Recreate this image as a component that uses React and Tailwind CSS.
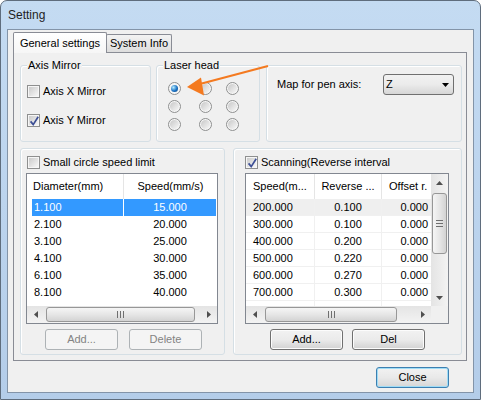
import React from "react";

const leftRows = [
	["1.100", "15.000"],
	["2.100", "20.000"],
	["3.100", "25.000"],
	["4.100", "30.000"],
	["6.100", "35.000"],
	["8.100", "40.000"],
];

const rightRows = [
	["200.000", "0.100", "0.000"],
	["300.000", "0.100", "0.000"],
	["400.000", "0.200", "0.000"],
	["500.000", "0.220", "0.000"],
	["600.000", "0.270", "0.000"],
	["700.000", "0.300", "0.000"],
	["", "", ""],
];

const Checkbox = ({ checked }) => (
	<span className="relative flex h-[13px] w-[13px] shrink-0 items-center justify-center border border-[#8e8f8f] bg-[#f6f6f6]">
		<span className="h-[9px] w-[9px] bg-gradient-to-br from-[#cbcbcb] to-[#f7f7f7]" />
		{checked && (
			<svg className="absolute left-0 top-0" width="13" height="13" viewBox="0 0 13 13">
				<path d="M2.6 6.4 L5.2 9.6 L10.2 1.8" fill="none" stroke="#3d4f95" strokeWidth="1.7" />
			</svg>
		)}
	</span>
);

const Radio = ({ checked }) => (
	<span className="flex h-[13px] w-[13px] items-center justify-center rounded-full border border-[#8e8f8f] bg-[#f6f6f6]">
		{checked ? (
			<span className="h-[7px] w-[7px] rounded-full bg-[radial-gradient(circle_at_35%_35%,#b6ecff,#1a72c4_55%,#0a3f7a)]" />
		) : (
			<span className="h-[9px] w-[9px] rounded-full bg-gradient-to-br from-[#c8c8c8] to-[#f8f8f8]" />
		)}
	</span>
);

const Group = ({ label, className, children }) => (
	<div className={`relative rounded-[3px] border border-[#d5dfe5] shadow-[inset_1px_1px_0_#ffffff] ${className}`}>
		{label && (
			<span className="absolute -top-[8px] left-[6px] bg-[#f0f0f0] px-[1px] leading-[14px]">
				{label}
			</span>
		)}
		{children}
	</div>
);

const Button = ({ children, disabled }) => (
	<div
		className={`flex h-[21px] w-[73px] items-center justify-center rounded-[3px] border ${
			disabled
				? "border-[#adb2b5] bg-[#f4f4f4] text-[#838383]"
				: "border-[#707070] bg-gradient-to-b from-[#f2f2f2] via-[#ebebeb] to-[#d2d2d2] text-black shadow-[inset_0_0_0_1px_#fcfcfc]"
		}`}
	>
		{children}
	</div>
);

const Arrow = ({ dir }) => {
	const pts = {
		left: "5,0 5,7 1,3.5",
		right: "1,0 1,7 5,3.5",
		up: "0,5 7,5 3.5,1",
		down: "0,1 7,1 3.5,5",
	}[dir];
	const w = dir === "left" || dir === "right" ? 6 : 7;
	const h = dir === "left" || dir === "right" ? 7 : 6;
	return (
		<svg width={w} height={h} viewBox={`0 0 ${w} ${h}`}>
			<polygon points={pts} fill="#4f4f4f" />
		</svg>
	);
};

const HScroll = ({ width, thumbLeft, thumbWidth }) => (
	<div className="flex h-[17px] shrink-0 items-center bg-gradient-to-b from-[#e4e4e4] to-[#f3f3f3]" style={{ width }}>
		<div className="flex h-[17px] w-[17px] shrink-0 items-center justify-center">
			<Arrow dir="left" />
		</div>
		<div
			className="flex h-[15px] shrink-0 items-center justify-center gap-[2px] rounded-[3px] border border-[#979797] bg-gradient-to-b from-[#f5f5f5] via-[#e6e6e6] to-[#d3d3d3]"
			style={{ marginLeft: thumbLeft, width: thumbWidth }}
		>
			<span className="h-[7px] w-[1px] bg-[#6f6f6f]" />
			<span className="h-[7px] w-[1px] bg-[#6f6f6f]" />
			<span className="h-[7px] w-[1px] bg-[#6f6f6f]" />
		</div>
		<div className="flex-1" />
		<div className="flex h-[17px] w-[17px] shrink-0 items-center justify-center">
			<Arrow dir="right" />
		</div>
	</div>
);

const VScroll = () => (
	<div className="flex h-[132px] w-[17px] shrink-0 flex-col items-center bg-gradient-to-r from-[#e4e4e4] to-[#f3f3f3]">
		<div className="flex h-[17px] w-[17px] shrink-0 items-center justify-center">
			<Arrow dir="up" />
		</div>
		<div className="mt-[2px] flex h-[61px] w-[15px] shrink-0 flex-col items-center justify-center gap-[2px] rounded-[3px] border border-[#979797] bg-gradient-to-r from-[#f5f5f5] via-[#e6e6e6] to-[#d3d3d3]">
			<span className="h-[1px] w-[7px] bg-[#6f6f6f]" />
			<span className="h-[1px] w-[7px] bg-[#6f6f6f]" />
			<span className="h-[1px] w-[7px] bg-[#6f6f6f]" />
		</div>
		<div className="flex-1" />
		<div className="flex h-[17px] w-[17px] shrink-0 items-center justify-center">
			<Arrow dir="down" />
		</div>
	</div>
);

export default function App() {
	return (
		<div className="relative h-[400px] w-[481px] overflow-hidden rounded-t-[7px] border border-[#5f6d7d] bg-gradient-to-b from-[#c4dbf2] via-[#bcd4ee] to-[#b4cde9] font-['Liberation_Sans',Arial,sans-serif] text-[11px] text-black">
			{/* Title bar */}
			<div className="flex h-[28px] items-center pl-[7px] text-[12px] text-[#1e1e1e]">Setting</div>

			{/* Client area */}
			<div className="mx-[6px] flex h-[364px] flex-col border border-[#8394a8] bg-[#f0f0f0]">
				{/* Tabs */}
				<div className="flex h-[22px] items-end pl-[5px]">
					<div className="relative z-10 -mb-px flex h-[21px] w-[94px] items-center justify-center rounded-t-[2px] border border-b-0 border-[#898c95] bg-gradient-to-b from-white to-[#f6f6f6]">
						General settings
					</div>
					<div className="-ml-px flex h-[18px] w-[66px] items-center justify-center rounded-t-[2px] border border-b-0 border-[#898c95] bg-gradient-to-b from-[#f3f3f3] to-[#dddddd]">
						System Info
					</div>
				</div>

				{/* Tab panel */}
				<div className="ml-[5px] flex h-[309px] w-[454px] flex-col border border-[#898c95] bg-[#f0f0f0]">
					{/* Top row */}
					<div className="ml-[6px] mt-[12px] flex h-[77px] gap-[5px]">
						<Group label="Axis Mirror" className="w-[131px]">
							<div className="flex flex-col gap-[16px] pl-[6px] pt-[19px]">
								<div className="flex h-[13px] items-center gap-[3px]">
									<Checkbox />
									<span>Axis X Mirror</span>
								</div>
								<div className="flex h-[13px] items-center gap-[3px]">
									<Checkbox checked />
									<span>Axis Y Mirror</span>
								</div>
							</div>
						</Group>

						<Group label="Laser head" className="w-[104px]">
							<div className="grid grid-cols-[31px_27px_13px] gap-y-[5px] pl-[11px] pt-[16px]">
								{[0, 1, 2, 3, 4, 5, 6, 7, 8].map((i) => (
									<Radio key={i} checked={i === 0} />
								))}
							</div>
						</Group>

						<Group className="ml-[1px] w-[196px]">
							<div className="flex items-center pl-[10px] pt-[8px]">
								<span className="w-[106px]">Map for pen axis:</span>
								<div className="flex h-[21px] w-[71px] items-center justify-between rounded-[3px] border border-[#707070] bg-gradient-to-b from-[#f2f2f2] via-[#ebebeb] to-[#d6d6d6] pl-[2px] pr-[4px]">
									<span>Z</span>
									<svg width="7" height="4" viewBox="0 0 7 4">
										<polygon points="0,0 7,0 3.5,4" fill="#000" />
									</svg>
								</div>
							</div>
						</Group>
					</div>

					{/* Bottom row */}
					<div className="ml-[6px] mt-[6px] flex h-[207px] gap-[8px]">
						<Group className="flex w-[205px] flex-col">
							<div className="ml-[6px] mt-[7px] flex h-[13px] items-center gap-[3px]">
								<Checkbox />
								<span>Small circle speed limit</span>
							</div>
							<div className="ml-[5px] mt-[4px] flex h-[151px] w-[192px] flex-col overflow-hidden border border-[#828790] bg-white">
								<div className="h-[132px] overflow-hidden">
									<div className="flex h-[25px]">
										<div className="flex w-[97px] items-center border-r border-[#e5e5e5] pl-[6px]">Diameter(mm)</div>
										<div className="flex flex-1 items-center justify-center">Speed(mm/s)</div>
									</div>
									{leftRows.map((r, i) => (
										<div key={i} className="flex h-[17px] pl-[5px]">
											<div className={`flex w-[91px] items-center pl-[2px] ${i === 0 ? "bg-[#3399ff] text-white" : ""}`}>{r[0]}</div>
											<div className="w-[1px]" />
											<div className={`flex w-[92px] items-center justify-center ${i === 0 ? "bg-[#3399ff] text-white" : ""}`}>{r[1]}</div>
										</div>
									))}
								</div>
								<HScroll width={190} thumbLeft={2} thumbWidth={149} />
							</div>
							<div className="ml-[24px] mt-[5px] flex gap-[11px]">
								<Button disabled>Add...</Button>
								<Button disabled>Delete</Button>
							</div>
						</Group>

						<Group className="flex w-[229px] flex-col">
							<div className="ml-[11px] mt-[7px] flex h-[13px] items-center gap-[3px]">
								<Checkbox checked />
								<span>Scanning(Reverse interval</span>
							</div>
							<div className="ml-[11px] mt-[4px] flex h-[151px] w-[204px] flex-col overflow-hidden border border-[#828790] bg-white">
								<div className="flex h-[132px]">
									<div className="w-[185px] overflow-hidden">
										<div className="flex h-[25px] whitespace-nowrap">
											<div className="flex w-[69px] items-center border-r border-[#e5e5e5] pl-[7px]">Speed(m...</div>
											<div className="flex w-[67px] items-center justify-center border-r border-[#e5e5e5]">Reverse ...</div>
											<div className="flex w-[49px] items-center overflow-hidden pl-[7px]">Offset r.</div>
										</div>
										{rightRows.map((r, i) => (
											<div key={i} className={`flex h-[17px] border-b border-[#f0f0f0] ${i === 0 ? "bg-[#efefef]" : ""}`}>
												<div className="flex w-[69px] items-center border-r border-[#f0f0f0] pl-[7px]">{r[0]}</div>
												<div className="flex w-[67px] items-center justify-center border-r border-[#f0f0f0]">{r[1]}</div>
												<div className="flex w-[49px] items-center justify-end pr-[3px]">{r[2]}</div>
											</div>
										))}
									</div>
									<VScroll />
								</div>
								<div className="flex h-[17px]">
									<HScroll width={185} thumbLeft={2} thumbWidth={132} />
									<div className="w-[17px] bg-[#f0f0f0]" />
								</div>
							</div>
							<div className="ml-[36px] mt-[5px] flex gap-[9px]">
								<Button>Add...</Button>
								<Button>Del</Button>
							</div>
						</Group>
					</div>
				</div>

				{/* Footer */}
				<div className="mt-[6px] flex justify-end pr-[24px]">
					<div className="flex h-[21px] w-[73px] items-center justify-center rounded-[3px] border border-[#3c7fb1] bg-gradient-to-b from-[#f2f2f2] via-[#e9e9e9] to-[#d6d6d6] shadow-[inset_0_0_0_1px_#9fdcf6]">
						Close
					</div>
				</div>
			</div>

			{/* Annotation arrow */}
			<svg className="pointer-events-none absolute left-0 top-0" width="481" height="400" viewBox="0 0 481 400">
				<line x1="267" y1="65" x2="197" y2="83.5" stroke="#f47a20" strokeWidth="2.2" />
				<polygon points="186,86 200,76.5 203,94.5" fill="#f47a20" />
			</svg>
		</div>
	);
}
